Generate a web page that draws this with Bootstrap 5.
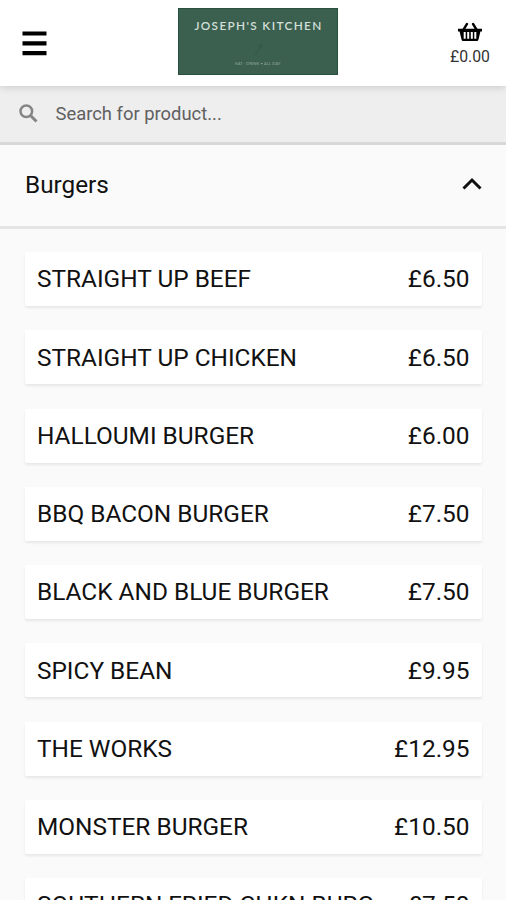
<!DOCTYPE html>
<html lang="en">
<head>
<meta charset="utf-8">
<meta name="viewport" content="width=device-width, initial-scale=1">
<title>Joseph's Kitchen</title>
<link href="https://cdn.jsdelivr.net/npm/bootstrap@5.3.0/dist/css/bootstrap.min.css" rel="stylesheet">
<style>
body{font-family:Roboto,"Liberation Sans",sans-serif;background:#fafafa;color:#111;height:900px;overflow:hidden}
.topbar{height:86px;padding:0 16px 0 22px;background:#fff;box-shadow:0 1px 8px rgba(0,0,0,.16);z-index:2}
.side{width:60px}
.menu-icon{margin-top:31px}
.brand{width:160px;height:67px;margin:8px 0 0 4px;background:#3b604f;border:1px solid #28503f;color:#d3dfd8;font-family:Lato,sans-serif}
.brand-name{font-size:11.8px;line-height:14px;letter-spacing:1.35px;margin:10px 0 0 1px;font-weight:600;white-space:nowrap}
.brand-leaf{margin-top:9px}
.brand-tag{font-size:4px;line-height:6px;letter-spacing:.15px;color:#93aa9d;margin-top:5px}
.basket-icon{margin:22px 7px 6px 0}
.basket-total{font-size:15.8px;line-height:18px;color:#333}
.searchbar{height:58.5px;background:#eee;border-bottom:3px solid #d8d8d8;padding:0 19px;color:#606060;font-size:18.4px}
.searchtext{margin-left:17.5px}
.category{height:84px;border-bottom:3px solid #e4e4e4;padding:0 24px 0 25px;font-size:24.3px}
.chevron{margin-bottom:3px}
.products{padding:23.5px 24px 0 25px;gap:24.25px}
.product{height:54px;flex:none;background:#fff;border-radius:2px;padding:1.5px 12.5px 0 12px;font-size:24.4px;box-shadow:0 2px 3px rgba(0,0,0,.08)}
</style>
</head>
<body>
<header class="topbar d-flex justify-content-between align-items-start position-relative">
  <div class="side"><svg class="menu-icon d-block" width="26" height="26" viewBox="0 0 26 26"><path d="M.5 2.5h24M.5 12.3h24M.5 22.1h24" stroke="#000" stroke-width="4.2"/></svg></div>
  <div class="brand d-flex flex-column align-items-center">
    <div class="brand-name">JOSEPH'S KITCHEN</div>
    <svg class="brand-leaf" width="12" height="14" viewBox="0 0 12 14"><path d="M3 13L7 7M7 7q0-4 3-5q0 4-3 5" stroke="#345747" fill="none"/></svg>
    <div class="brand-tag">EAT · DRINK • ALL DAY</div>
  </div>
  <div class="side d-flex flex-column align-items-end">
    <svg class="basket-icon" width="26" height="20" viewBox="0 0 26 21" preserveAspectRatio="none"><path d="M6.500 8L10 2M19.500 8L16 2" stroke="#000" stroke-width="2.400" stroke-linecap="round"/><path d="M1 7.200h24v2.800h-1.600l-1.900 8.400q-.3 1.600-1.800 1.600H6.300q-1.500 0-1.800-1.600L2.600 10H1z"/><path d="M7.700 10.500v7M11.200 10.500v7M14.800 10.500v7M18.300 10.500v7" stroke="#fff" stroke-width="2"/></svg>
    <div class="basket-total">£0.00</div>
  </div>
</header>
<div class="searchbar d-flex align-items-center">
  <svg width="19" height="19" viewBox="0 0 19 19" fill="none" stroke="#858585"><circle cx="7.300" cy="7.300" r="5.800" stroke-width="2.500"/><path d="M11.500 11.500l6 6" stroke-width="3"/></svg>
  <span class="searchtext">Search for product...</span>
</div>
<div class="category d-flex align-items-center justify-content-between">
  <span>Burgers</span>
  <svg class="chevron" width="20" height="13" viewBox="0 0 20 13"><path d="M1.500 11.500L10 3l8.500 8.500" fill="none" stroke="#111" stroke-width="3"/></svg>
</div>
<main class="products d-flex flex-column">
  <div class="product d-flex align-items-center justify-content-between"><span>STRAIGHT UP BEEF</span><span>£6.50</span></div>
  <div class="product d-flex align-items-center justify-content-between"><span>STRAIGHT UP CHICKEN</span><span>£6.50</span></div>
  <div class="product d-flex align-items-center justify-content-between"><span>HALLOUMI BURGER</span><span>£6.00</span></div>
  <div class="product d-flex align-items-center justify-content-between"><span>BBQ BACON BURGER</span><span>£7.50</span></div>
  <div class="product d-flex align-items-center justify-content-between"><span>BLACK AND BLUE BURGER</span><span>£7.50</span></div>
  <div class="product d-flex align-items-center justify-content-between"><span>SPICY BEAN</span><span>£9.95</span></div>
  <div class="product d-flex align-items-center justify-content-between"><span>THE WORKS</span><span>£12.95</span></div>
  <div class="product d-flex align-items-center justify-content-between"><span>MONSTER BURGER</span><span>£10.50</span></div>
  <div class="product d-flex align-items-center justify-content-between"><span>SOUTHERN FRIED CHKN BURG</span><span>£7.50</span></div>
</main>
<script src="https://cdn.jsdelivr.net/npm/bootstrap@5.3.0/dist/js/bootstrap.bundle.min.js"></script>
</body>
</html>
